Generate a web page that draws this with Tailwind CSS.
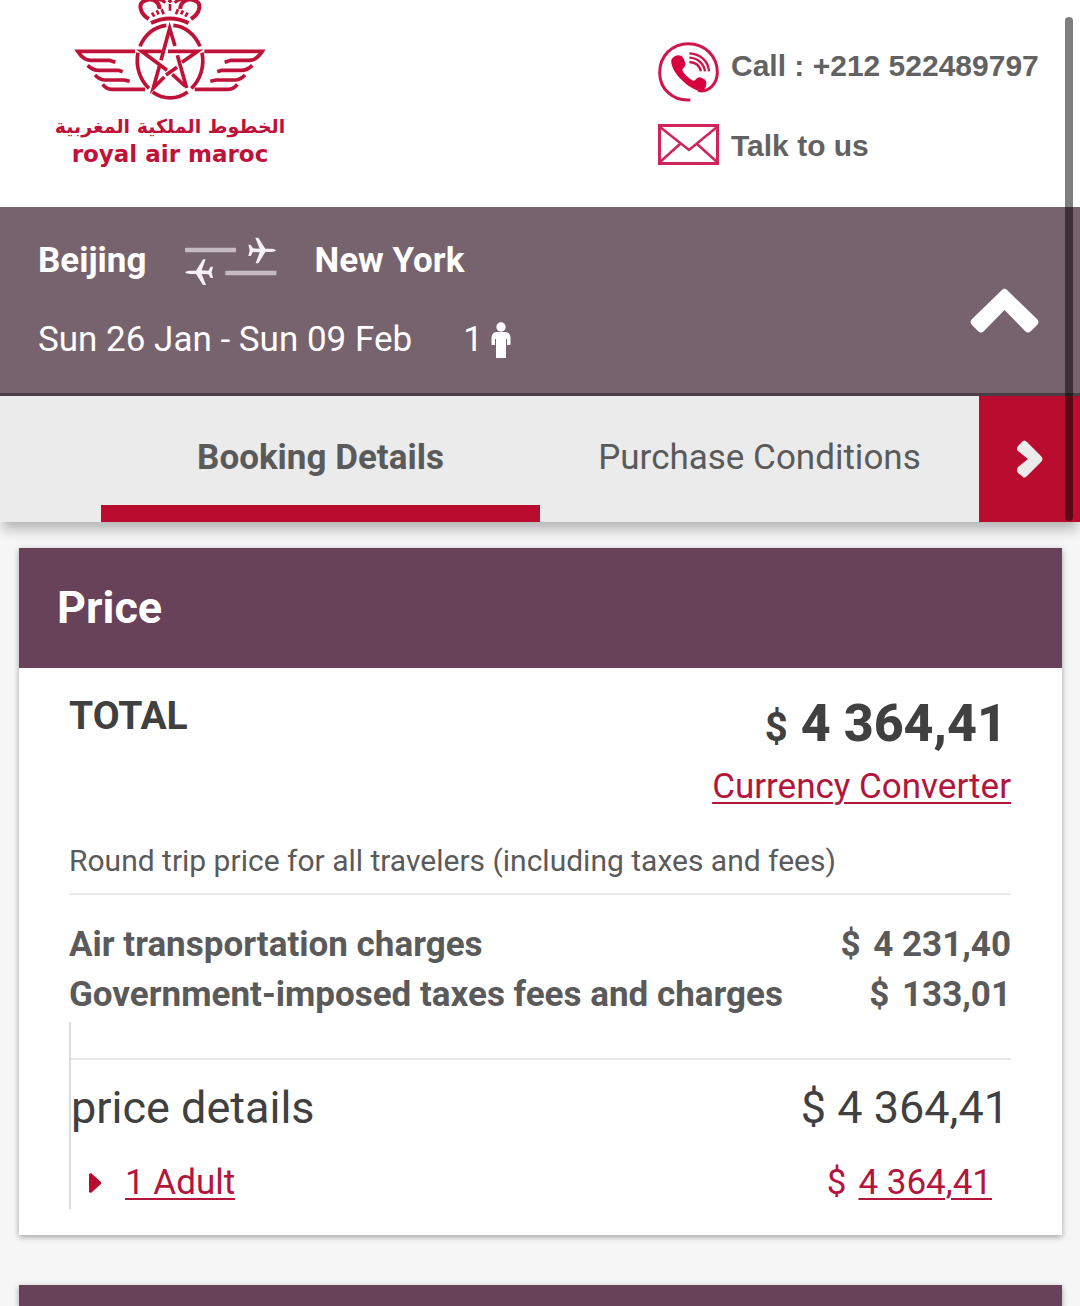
<!DOCTYPE html>
<html lang="en">
<head>
<meta charset="utf-8">
<meta name="viewport" content="width=device-width, initial-scale=1">
<title>Royal Air Maroc - Booking Details</title>
<script src="https://cdn.jsdelivr.net/npm/@tailwindcss/browser@4"></script>
</head>
<body class="relative bg-[#f6f6f6] font-['Roboto',sans-serif] text-[#5a5a5a]">
<header class="relative z-10 bg-[#ebebeb] shadow-[0_10px_12px_-3px_rgba(0,0,0,0.28)]">
  <div class="flex h-[207px] items-start justify-between bg-white pr-10 pl-10">
    <a href="#" class="flex w-[260px] flex-col items-center text-[#bf1238]" aria-label="Royal Air Maroc">
      <svg class="h-[110px] w-[260px]" viewBox="0 0 780 330" fill="none" stroke="currentColor" stroke-width="11">
        <path d="M333 69Q390 42 446 69" stroke-width="12"/>
        <path d="M326 57C300 40 292 10 315 2C340-8 360 8 358 27" stroke-width="12"/>
        <path d="M453 57C480 40 487 10 465 2C440-8 420 8 421 27" stroke-width="12"/>
        <path d="M346 0Q362-6 376 8M434 0Q418-6 404 8" stroke-width="9"/>
        <path d="M390 12V32M365 28L371 43M414 28L408 43M336 38L343 50M443 38L436 50M350 31L356 43M429 31L423 43" stroke-width="8"/>
        <path d="M382 4L390-4L398 4L390 10Z" fill="currentColor" stroke="none"/>
        <path d="M300 139A96 110 0 0 1 379 76M400 76A96 110 0 0 1 480 139M486 158A96 108 0 0 1 454 265M443 276A96 108 0 0 1 338 276M327 265A96 108 0 0 1 294 158"/>
        <path d="M363 181L389 85L405 138M384 154H473L426 187M411 202L378 225M365 154H305L381 211M397 223L435 258M412 166L440 264M359 196L340 264L373 231"/>
        <path d="M285 154H113Q130 181 152 181H208L226 187M143 196Q158 211 177 211H235L248 215M165 225Q180 240 195 240H252L269 244M188 253Q200 268 215 268H315"/>
        <path d="M493 154H667Q650 181 628 181H572L554 187M637 196Q622 211 603 211H545L532 215M615 225Q600 240 585 240H528L511 244M592 253Q580 268 565 268H464"/>
      </svg>
      <span lang="ar" dir="rtl" class="mt-1 flex h-6 items-center whitespace-nowrap font-['DejaVu_Sans',sans-serif] text-[19px] leading-6 font-bold">الخطوط الملكية المغربية</span>
      <span class="mt-1 whitespace-nowrap font-['DejaVu_Sans',sans-serif] text-[23px] leading-6 font-bold">royal air maroc</span>
    </a>
    <div class="flex w-[382px] flex-col gap-5 pt-[42px] font-['Liberation_Sans',sans-serif] text-[30px] leading-[48px] font-bold text-[#626262]">
      <a href="tel:+212522489797" class="flex h-[61px] items-start gap-3 whitespace-nowrap">
        <svg class="h-[61px] w-[61px] shrink-0 text-[#d0144c]" viewBox="0 0 183 183" fill="none" stroke="currentColor">
          <path d="M120 145C155 154 178 122 178 91C178 42 140 5 91 5C42 5 5 42 5 92C5 141 45 178 97 174" stroke-width="9"/>
          <path d="M40 54C46 40 68 34 76 48L81 61C86 73 75 78 73 83C72 90 95 112 106 116C113 118 115 105 126 106L139 112C150 119 145 141 133 147C108 153 35 94 40 54Z" fill="#d8003f" stroke="none"/>
          <path d="M94 34C127 35 151 58 153 88M94 47C120 48 138 66 141 88M94 60C113 61 125 72 129 88" stroke-width="7"/>
        </svg>
        <span>Call : +212 522489797</span>
      </a>
      <a href="#" class="flex h-[42px] items-center gap-3 whitespace-nowrap">
        <svg class="h-[41px] w-[61px] shrink-0 text-[#d0245a]" viewBox="0 0 61 41" fill="none" stroke="currentColor">
          <rect x="1.5" y="1.5" width="58" height="38" stroke-width="3"/>
          <path d="M2 3L31 26L59 3M2 38L22 20M59 38L39 20" stroke-width="2.5"/>
        </svg>
        <span class="pt-1">Talk to us</span>
      </a>
    </div>
  </div>

  <div class="flex h-[189px] items-center justify-between border-b-[3px] border-[#4b3f46] bg-[#77636e] pr-[41px] pl-[38px] text-[35px] leading-[44px] text-white">
    <div class="flex flex-col gap-8 self-start pt-[29px]">
      <div class="flex items-center font-bold">
        <span>Beijing</span>
        <svg class="mx-[38px] h-[50px] w-[92px]" viewBox="0 0 276 150" aria-label="round trip">
          <path d="M0 35H153V49H0ZM121 104H274V118H121Z" fill="#c5bcc2"/>
          <path d="M273 43C273 46 264 48 256 48H241L220 82H212L224 49L204 48L197 60H190L194 43L190 26H197L204 37L224 38L211 5H220L241 38H256C264 38 273 40 273 43Z" fill="#f5f0f4"/>
          <path d="M1 109C1 106 10 104 18 104H33L54 70H62L50 103L70 104L77 92H84L80 109L84 126H77L70 115L50 114L63 147H54L33 114H18C10 114 1 112 1 109Z" fill="#f5f0f4"/>
        </svg>
        <span>New York</span>
      </div>
      <div class="flex items-center">
        <span class="mr-[51px]">Sun 26 Jan - Sun 09 Feb</span>
        <span>1</span>
        <svg class="ml-2 h-9 w-5" viewBox="0 0 20 36" fill="white" aria-label="adult"><circle cx="10" cy="5" r="4.7"/><path d="M5 10H15Q19.500 11 19.500 16V23H16V17H15V36H5V17H4V23H.5V16Q.5 11 5 10Z"/></svg>
      </div>
    </div>
    <button type="button" aria-label="Collapse trip summary" class="mt-5">
      <svg class="h-[45px] w-[69px]" viewBox="0 0 69 45"><path d="M32 2Q34.500-1 37 2L67 31Q70 34 67 37L61 43Q58 46 55 43L34.500 22L14 43Q11 46 8 43L2 37Q-1 34 2 31Z" fill="white"/></svg>
    </button>
  </div>

  <nav class="flex h-[126px] text-[35px]">
    <div class="w-[101px] shrink-0"></div>
    <a href="#" aria-current="page" class="flex flex-1 items-center justify-center whitespace-nowrap border-b-[17px] border-[#b90c2e] pt-[15px] font-bold">Booking Details</a>
    <a href="#" class="flex flex-1 items-center justify-center whitespace-nowrap pb-[2px]">Purchase Conditions</a>
    <button type="button" aria-label="Next tab" class="flex w-[101px] shrink-0 items-center justify-center bg-[#b90c2e]">
      <svg class="h-[38px] w-[26px]" viewBox="0 0 26 38"><path d="M1 6L5 2Q7-1 10 2L24 16Q27 19 24 22L10 36Q7 39 5 36L1 33Q-1 30 1 27L11 19L1 11Q-1 9 1 6Z" fill="#ebebeb"/></svg>
    </button>
  </nav>
</header>

<main class="flex flex-col gap-[50px] pt-[26px] pr-[18px] pl-[19px]">
  <section class="bg-white shadow-[0_2px_6px_rgba(0,0,0,0.35)]">
    <h2 class="flex h-[120px] items-center bg-[#674258] px-[38px] text-[45px] font-bold text-white">Price</h2>
    <div class="pt-6 pr-[51px] pb-[26px] pl-[50px]">
      <div class="flex items-start justify-between">
        <h3 class="text-[39px] leading-[48px] font-bold text-[#404040]">TOTAL</h3>
        <div class="flex flex-col items-end">
          <p class="pr-1 text-[52px] leading-[64px] font-extrabold text-[#404040]"><span class="text-[40px] font-bold">$</span> 4 364,41</p>
          <a href="#" class="text-[35px] leading-[54px] text-[#b3153b] underline decoration-2 underline-offset-4">Currency Converter</a>
        </div>
      </div>
      <p class="border-b-2 border-[#e9e9e9] pt-6 pb-[9px] text-[30px] leading-[46px]">Round trip price for all travelers (including taxes and fees)</p>
      <table class="mt-[25px] w-full text-[35px] leading-[50px] font-bold">
        <tbody>
          <tr><th scope="row" class="text-left">Air transportation charges</th><td class="text-right whitespace-nowrap"><span class="mr-1">$</span> 4 231,40</td></tr>
          <tr><th scope="row" class="text-left">Government-imposed taxes fees and charges</th><td class="text-right whitespace-nowrap"><span class="mr-1">$</span> 133,01</td></tr>
        </tbody>
      </table>
      <div class="mt-[2px] border-l-2 border-[#dcdcdc] pt-9">
        <div class="flex justify-between border-t-2 border-[#e9e9e9] pt-[19px] pr-[2px] text-[45px] leading-[58px] text-[#404040]">
          <span>price details</span><span>$ 4 364,41</span>
        </div>
        <div class="flex items-center pt-5 pr-[19px] pl-[18px] text-[35px] leading-[52px] text-[#b3153b]">
          <svg class="h-5 w-3" viewBox="0 0 12 20"><path d="M0 1L2 0L12 9V11L2 20L0 19Z" fill="#b90c2e"/></svg>
          <a href="#" class="ml-6 underline decoration-2 underline-offset-4">1 Adult</a>
          <span class="ml-auto">$</span>
          <a href="#" class="ml-3 underline decoration-2 underline-offset-4">4 364,41</a>
        </div>
      </div>
    </div>
  </section>
  <section class="h-[22px] bg-[#674258] shadow-[0_2px_6px_rgba(0,0,0,0.35)]"></section>
</main>

<div class="absolute top-[17px] right-[7px] z-20 h-[504px] w-2 rounded-full bg-black/50"></div>
</body>
</html>
